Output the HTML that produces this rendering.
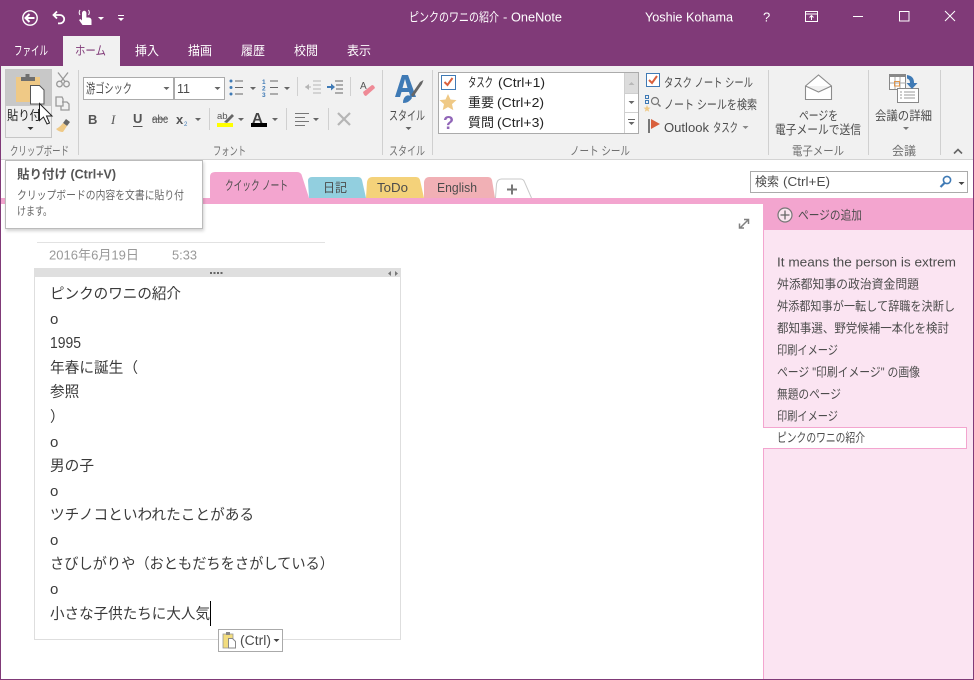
<!DOCTYPE html>
<html lang="ja"><head><meta charset="utf-8"><title>OneNote</title>
<style>
html,body{margin:0;padding:0;background:#fff;width:974px;height:680px;overflow:hidden}
svg{display:block;position:absolute;left:0;top:0}
text{font-family:"Liberation Sans","Noto Sans CJK JP",sans-serif;font-size:12.5px;fill:#555;white-space:pre}
.w{fill:#fff}
.k{fill:#222;font-size:13px}
.n{font-size:14.67px;fill:#3a3a3a}
.l{font-size:12px;fill:#707070}
.p{font-size:12.5px;fill:#4c4c4c}
.g{fill:none;stroke:#999;stroke-width:1.3}
</style></head><body>
<svg width="974" height="680" viewBox="0 0 974 680" xmlns="http://www.w3.org/2000/svg">
<!-- window -->
<rect width="974" height="680" fill="#fff"/>
<rect width="974" height="66" fill="#803a78"/>
<!-- title bar -->
<circle cx="30" cy="18" r="7.200" fill="none" stroke="#fff" stroke-width="1.400"/>
<path d="M25.500 18h9M29.500 14l-4 4 4 4" fill="none" stroke="#fff" stroke-width="2"/>
<path d="M57 11.500l-3.500 3.500 3.500 3.500M54 15h6a4.200 4.200 0 0 1 0 8.400h-2" fill="none" stroke="#fff" stroke-width="1.800"/>
<path d="M82 16v-3a2.200 2.200 0 0 1 4.400 0v4.500h2.600q2.500 .5 2.500 3v4.500h-9l-3.500-5 1.500-1 1.500 1.500z" fill="#fff"/>
<path d="M80 15a4.500 4.500 0 0 1 0-5M88.500 15a4.500 4.500 0 0 0 0-5" fill="none" stroke="#fff" stroke-width="1"/>
<path d="M98 17h6l-3 3zM118 15h6v1h-6zM118 18h6l-3 3z" fill="#fff"/>
<text class="w" x="409" y="21.500" textLength="90" lengthAdjust="spacingAndGlyphs">ピンクのワニの紹介</text>
<text class="w" x="503" y="21.500" style="font-size:13px">-</text>
<text class="w" x="511" y="21.500" textLength="51" lengthAdjust="spacingAndGlyphs" style="font-size:13px">OneNote</text>
<text class="w" x="645" y="21.500" textLength="88" lengthAdjust="spacingAndGlyphs" style="font-size:13px">Yoshie Kohama</text>
<text class="w" x="763" y="21.500" style="font-size:13px">?</text>
<path d="M805.500 11.500h12v10h-12zM805.500 14h12M811.500 20v-4M809.500 17.500l2-2 2 2" fill="none" stroke="#fff"/>
<path d="M853 16.500h10" stroke="#fff" fill="none"/>
<rect x="899.500" y="11.500" width="9.500" height="9.500" fill="none" stroke="#fff"/>
<path d="M945 11l10 10M955 11l-10 10" stroke="#fff" fill="none"/>
<!-- menu tabs -->
<rect x="63" y="36" width="57" height="30" fill="#f1f1f1"/>
<text class="w" x="14" y="55" textLength="34" lengthAdjust="spacingAndGlyphs">ファイル</text>
<text x="75" y="55" textLength="31" lengthAdjust="spacingAndGlyphs" style="fill:#803a78">ホーム</text>
<text class="w" x="135" y="55" textLength="24" lengthAdjust="spacingAndGlyphs">挿入</text>
<text class="w" x="188" y="55" textLength="24" lengthAdjust="spacingAndGlyphs">描画</text>
<text class="w" x="241" y="55" textLength="24" lengthAdjust="spacingAndGlyphs">履歴</text>
<text class="w" x="294" y="55" textLength="24" lengthAdjust="spacingAndGlyphs">校閲</text>
<text class="w" x="347" y="55" textLength="24" lengthAdjust="spacingAndGlyphs">表示</text>
<!-- ribbon -->
<rect y="66" width="974" height="93" fill="#f1f1f1"/>
<rect y="159" width="974" height="1" fill="#d4d4d4"/>
<g fill="#d0d0d0">
<rect x="78" y="70" width="1" height="85"/><rect x="382" y="70" width="1" height="85"/><rect x="432" y="70" width="1" height="85"/>
<rect x="768" y="70" width="1" height="85"/><rect x="868" y="70" width="1" height="85"/><rect x="940" y="70" width="1" height="85"/>
<rect x="297" y="77" width="1" height="19"/><rect x="350" y="77" width="1" height="19"/>
<rect x="209" y="108" width="1" height="22"/><rect x="286" y="108" width="1" height="22"/><rect x="328" y="108" width="1" height="22"/>
</g>
<!-- paste -->
<rect x="5.500" y="69.500" width="46" height="68" fill="#efefef" stroke="#c6c6c6"/>
<rect x="6" y="70" width="45" height="36" fill="#c8c8c8"/>
<rect x="16" y="77" width="24" height="25" fill="#efc986"/>
<path d="M21 81v-4h4.500v-3h4v3H35v4z" fill="#6f6f6f"/>
<path d="M30.500 85.500h9l4.500 4.500v14h-13.500z" fill="#fff" stroke="#555"/>
<text class="k" x="7" y="120" textLength="34" lengthAdjust="spacingAndGlyphs">貼り付</text>
<path d="M27.500 127h6l-3 3z" fill="#333"/>
<path d="M39.500 103.500v17l4-3.500 3.500 7 2.500-1-3-7h5.500z" fill="#fff" stroke="#222"/>
<!-- scissors, copy, brush -->
<path class="g" d="M58 72.500l7 9M68 72.500l-7 9"/><circle class="g" cx="59.500" cy="84" r="2.800"/><circle class="g" cx="66.500" cy="84" r="2.800"/>
<path class="g" d="M56 97h6l1 2v7h-7zM62 102h5l2 2v6h-8v-4"/>
<path d="M66 119l4 3-3 4-4-3z" fill="#666"/><path d="M63 123l4 3-4 6q-4 0-7-3 4-2 7-6z" fill="#efc986"/>
<text class="l" x="10" y="155" textLength="59" lengthAdjust="spacingAndGlyphs">クリップボード</text>
<!-- font combos -->
<rect x="83.500" y="77.500" width="90" height="22" fill="#fff" stroke="#ababab"/>
<rect x="174.500" y="77.500" width="50" height="22" fill="#fff" stroke="#ababab"/>
<text class="p" x="86" y="93" textLength="46" lengthAdjust="spacingAndGlyphs" style="font-size:13px">游ゴシック</text>
<text class="p" x="177" y="93" textLength="13" lengthAdjust="spacingAndGlyphs" style="font-size:13px">11</text>
<g fill="#666"><path d="M163.500 87h6l-3 3zM214.500 87h6l-3 3zM250 87h6l-3 3zM284 87h6l-3 3z"/><path d="M195 118h6l-3 3zM238 118h6l-3 3zM272 118h6l-3 3zM313 118h6l-3 3z"/></g>
<g fill="#3f7ab5"><circle cx="231" cy="81" r="1.500"/><circle cx="231" cy="87.500" r="1.500"/><circle cx="231" cy="94" r="1.500"/></g>
<path d="M235 81h8M235 87.500h8M235 94h8M270 81h8M270 87.500h8M270 94h8" stroke="#666" fill="none"/>
<text x="262" y="84" style="font-size:6.500px;fill:#3f7ab5;font-weight:bold">1</text><text x="262" y="90.500" style="font-size:6.500px;fill:#3f7ab5;font-weight:bold">2</text><text x="262" y="97" style="font-size:6.500px;fill:#3f7ab5;font-weight:bold">3</text>
<path d="M313 81h8M313 85h8M313 89h8M313 93h8M305 87h6" stroke="#b5b5b5" fill="none"/><path d="M305 87l4-3v6z" fill="#b5b5b5"/>
<path d="M335 81h8M336 85h7M336 89h7M335 93h8" stroke="#666" fill="none"/><path d="M327 86h6v2h-6z" fill="#3f7ab5"/><path d="M335 87l-4-3.500v7z" fill="#3f7ab5"/>
<text x="360" y="89" style="font-size:10px;fill:#555">A</text>
<path d="M363 92l9-7q2 0 3 3l-9 8q-2 0-3-4z" fill="#ef8a96"/>
<!-- font row 2 -->
<text x="88" y="124" style="font-size:13px;font-weight:bold;fill:#555">B</text>
<text x="111" y="124" style="font-size:13px;font-style:italic;font-family:'Liberation Serif',serif;fill:#555">I</text>
<text x="133" y="123" style="font-size:13px;font-weight:bold;fill:#555">U</text><path d="M133 126.500h9.500" stroke="#555" fill="none"/>
<text x="152" y="123" textLength="16" lengthAdjust="spacingAndGlyphs" style="font-size:12px;fill:#555">abc</text><path d="M152 119h16" stroke="#555" fill="none"/>
<text x="176" y="124" style="font-size:13px;font-weight:bold;fill:#555">x</text><text x="184" y="126" style="font-size:6px;fill:#3f7ab5">2</text>
<text x="217" y="119" style="font-size:9.500px;fill:#555">ab</text><path d="M224 122l8-8 2 2-7 7z" fill="#666"/><rect x="217" y="123" width="16" height="4" fill="#ffff00"/>
<text x="252" y="123" style="font-size:15px;fill:#444;font-weight:bold">A</text><rect x="251" y="123" width="16" height="4" fill="#000"/>
<path d="M295 113.500h14M295 117.500h10M295 121.500h14M295 125.500h10" stroke="#777" fill="none"/>
<path d="M338 113l12 12M350 113l-12 12" stroke="#b5b5b5" stroke-width="2.200" fill="none"/>
<text class="l" x="213" y="155" textLength="33" lengthAdjust="spacingAndGlyphs">フォント</text>
<!-- style -->
<path fill-rule="evenodd" d="M395 97L402 75h6L416 97h-5.500l-1.500-5h-7.500l-1.500 5zM402.500 88h5L405 79z" fill="#3f7ab5"/>
<path d="M411 95l9-13 3.500-2-1.500 4-9 13z" fill="#666"/><path d="M403 103q0-6 4-7.500 4-.5 5 2.500-3 5-9 5z" fill="#3f7ab5"/>
<text class="p" x="389" y="120" textLength="36" lengthAdjust="spacingAndGlyphs">スタイル</text>
<path d="M405.500 127h6l-3 3z" fill="#666"/>
<text class="l" x="389" y="155" textLength="36" lengthAdjust="spacingAndGlyphs">スタイル</text>
<!-- tag gallery -->
<rect x="438.500" y="72.500" width="200" height="61" fill="#fff" stroke="#ababab"/>
<rect x="625" y="73" width="13" height="20" fill="#dcdcdc"/>
<path d="M625 93.500h13M625 112.500h13M624.500 73v60" stroke="#cfcfcf" fill="none"/>
<path d="M628.500 85l3-3 3 3z" fill="#b8b8b8"/><path d="M628.500 101h6l-3 3z" fill="#666"/><path d="M628 119h7v1h-7zM628.500 122h6l-3 3z" fill="#666"/>
<rect x="441.500" y="75.500" width="14" height="14" fill="#fff" stroke="#3f7ab5"/>
<path d="M444.500 82l3 3 5-7" fill="none" stroke="#d9603c" stroke-width="2"/>
<path d="M448 94l2.500 5.500 6 .6-4.500 4 1.300 6-5.300-3-5.300 3 1.300-6-4.500-4 6-.6z" fill="#efc986"/>
<text x="443" y="129" style="font-size:18px;font-weight:bold;fill:#9166b8">?</text>
<text class="k" x="468" y="87" textLength="25" lengthAdjust="spacingAndGlyphs">タスク</text><text class="k" x="498" y="87" textLength="47" lengthAdjust="spacingAndGlyphs">(Ctrl+1)</text>
<text class="k" x="468" y="107">重要</text><text class="k" x="497" y="107" textLength="47" lengthAdjust="spacingAndGlyphs">(Ctrl+2)</text>
<text class="k" x="468" y="127">質問</text><text class="k" x="497" y="127" textLength="47" lengthAdjust="spacingAndGlyphs">(Ctrl+3)</text>
<text class="l" x="570" y="155" textLength="60" lengthAdjust="spacingAndGlyphs">ノート シール</text>
<rect x="646.500" y="73.500" width="13" height="13" fill="#fff" stroke="#3f7ab5"/>
<path d="M649 80l3 3 5-7" fill="none" stroke="#d9603c" stroke-width="2"/>
<text class="p" x="664" y="87" textLength="89" lengthAdjust="spacingAndGlyphs">タスク ノート シール</text>
<path d="M645.500 95.500h3v3h-3zM645.500 100.500h3v3h-3z" fill="none" stroke="#3f7ab5"/>
<circle cx="655" cy="101" r="3.500" fill="none" stroke="#777" stroke-width="1.200"/><path d="M658 104l2.500 2.500" stroke="#777" stroke-width="1.500"/>
<path d="M647 105l1 2.500 2.500.2-2 1.600.7 2.500-2.200-1.400-2.200 1.400.7-2.500-2-1.600 2.500-.2z" fill="#efc986"/>
<text class="p" x="664" y="109" textLength="93" lengthAdjust="spacingAndGlyphs">ノート シールを検索</text>
<rect x="648" y="119" width="2" height="14" fill="#777"/><path d="M651 119l9 5-9 5z" fill="#d9603c"/>
<text class="p" x="664" y="132" textLength="45" lengthAdjust="spacingAndGlyphs" style="font-size:13px">Outlook</text><text class="p" x="713" y="132" textLength="25" lengthAdjust="spacingAndGlyphs">タスク</text>
<path d="M742.500 126h6l-3 3z" fill="#888"/>
<!-- email -->
<path d="M805.500 86l13-11 13 11v13.500h-26zM805.500 86l13 6 13-6" fill="#fff" stroke="#8c8c8c" stroke-width="1.100"/>
<text class="p" x="799" y="120" textLength="39" lengthAdjust="spacingAndGlyphs">ページを</text>
<text class="p" x="775" y="134" textLength="86" lengthAdjust="spacingAndGlyphs">電子メールで送信</text>
<text class="l" x="792" y="155" textLength="52" lengthAdjust="spacingAndGlyphs">電子メール</text>
<!-- meeting -->
<rect x="889.500" y="75.500" width="16" height="14" fill="#fff" stroke="#888"/><rect x="889" y="74" width="17" height="3" fill="#888"/>
<path d="M895 77v12M900 77v12M890 83h16" stroke="#aaa" fill="none"/><rect x="894.500" y="81.500" width="5" height="4.500" fill="none" stroke="#e0954a"/>
<rect x="897.500" y="88.500" width="21" height="14" fill="#fff" stroke="#888"/>
<path d="M904 92h11M904 95h11M904 98h11M900 92h2M900 95h2M900 98h2" stroke="#999" fill="none"/>
<path d="M907 75q7 1 7 7.500v.5h3.500l-5.500 6-5.500-6h3.500v-.5q0-3-3-4z" fill="#3f7ab5"/>
<text class="p" x="875" y="120" textLength="57" lengthAdjust="spacingAndGlyphs">会議の詳細</text>
<path d="M903 127h6l-3 3z" fill="#777"/>
<text class="l" x="892" y="155" textLength="24" lengthAdjust="spacingAndGlyphs">会議</text>
<path d="M954 153.500l4-4 4 4" fill="none" stroke="#666" stroke-width="1.600"/>
<!-- section tabs -->
<rect y="198" width="974" height="6" fill="#f3a5cf"/>
<path d="M210 198v-21q0-5 5-5h82q4 0 5 4l7 22z" fill="#f3a5cf"/>
<path d="M309 198l-1-17q0-4 4-4h46q3 0 4 3l4 18z" fill="#92cfdf"/>
<path d="M366 198l1-16q1-5 5-5h44q3 0 4 3l4 18z" fill="#f4d27a"/>
<path d="M424 198l0-16q1-5 5-5h59q3 0 4 3l3 18z" fill="#f1b0b5"/>
<path d="M495.500 198l1-14q1-5 5-5h19q3 0 4 3l7 16" fill="#fff" stroke="#c9c9c9"/>
<text class="p" x="225" y="190" textLength="63" lengthAdjust="spacingAndGlyphs" style="font-size:13px">クイック ノート</text>
<text class="p" x="323" y="192" textLength="24" lengthAdjust="spacingAndGlyphs">日記</text>
<text class="p" x="377" y="192" textLength="31" lengthAdjust="spacingAndGlyphs" style="font-size:13px">ToDo</text>
<text class="p" x="437" y="192" textLength="40" lengthAdjust="spacingAndGlyphs" style="font-size:13px">English</text>
<path d="M507 189.500h10M512 184.500v10" stroke="#777" stroke-width="2" fill="none"/>
<!-- search -->
<rect x="750.500" y="171.500" width="217" height="21" fill="#fff" stroke="#ababab"/>
<text class="p" x="755" y="186" textLength="24" lengthAdjust="spacingAndGlyphs">検索</text><text class="p" x="783" y="186" textLength="47" lengthAdjust="spacingAndGlyphs" style="font-size:13px">(Ctrl+E)</text>
<circle cx="947" cy="180" r="3.600" fill="none" stroke="#3f7ab5" stroke-width="1.600"/><path d="M944.500 183l-4 4" stroke="#3f7ab5" stroke-width="2.200"/>
<path d="M958.500 182h6l-3 3z" fill="#444"/>
<!-- page panel -->
<rect x="763" y="204" width="211" height="476" fill="#fbe4f2"/>
<rect x="763" y="198" width="211" height="32" fill="#f3a5cf"/>
<rect x="763" y="230" width="1" height="450" fill="#f3a5cf"/>
<circle cx="785" cy="215" r="7" fill="#f9e4ef" stroke="#777" stroke-width="1.200"/>
<path d="M780.500 215h9M785 210.500v9" stroke="#666" stroke-width="1.300" fill="none"/>
<text class="p" x="798" y="219.500" textLength="64" lengthAdjust="spacingAndGlyphs">ページの追加</text>
<text class="p" x="777" y="266.500" textLength="179" lengthAdjust="spacingAndGlyphs" style="font-size:13px">It means the person is extrem</text>
<text class="p" x="777" y="288.500" textLength="142" lengthAdjust="spacingAndGlyphs">舛添都知事の政治資金問題</text>
<text class="p" x="777" y="310.500" textLength="178" lengthAdjust="spacingAndGlyphs">舛添都知事が一転して辞職を決断し</text>
<text class="p" x="777" y="332.500" textLength="172" lengthAdjust="spacingAndGlyphs">都知事選、野党候補一本化を検討</text>
<text class="p" x="777" y="354.500" textLength="61" lengthAdjust="spacingAndGlyphs">印刷イメージ</text>
<text class="p" x="777" y="376.500" textLength="143" lengthAdjust="spacingAndGlyphs">ページ "印刷イメージ" の画像</text>
<text class="p" x="777" y="398.500" textLength="64" lengthAdjust="spacingAndGlyphs">無題のページ</text>
<text class="p" x="777" y="420.500" textLength="61" lengthAdjust="spacingAndGlyphs">印刷イメージ</text>
<path d="M763 427.500h203.500v21H763" fill="#fff" stroke="#f3a5cf"/>
<rect x="763" y="428" width="3" height="20" fill="#fff"/>
<text class="p" x="777" y="442" textLength="88" lengthAdjust="spacingAndGlyphs">ピンクのワニの紹介</text>
<!-- page body -->
<path d="M740 228l8-8M744 219.500h4.500v4.500M739.500 223.500v4.500h4.500" fill="none" stroke="#808080" stroke-width="1.500"/>
<rect x="37" y="242" width="288" height="1" fill="#e2e2e2"/>
<text x="49" y="259.500" textLength="90" lengthAdjust="spacingAndGlyphs" style="fill:#999;font-size:13px">2016年6月19日</text>
<text x="172" y="259.500" textLength="25" lengthAdjust="spacingAndGlyphs" style="fill:#999;font-size:13px">5:33</text>
<rect x="34.500" y="268.500" width="366" height="371" fill="#fff" stroke="#dedede"/>
<rect x="34" y="268" width="367" height="9" fill="#dfdfdf"/>
<path d="M210 272h2v2h-2zM213.500 272h2v2h-2zM217 272h2v2h-2zM220.500 272h2v2h-2z" fill="#666"/>
<path d="M391 271v5l-3-2.500zM395 271v5l3-2.500z" fill="#777"/>
<text class="n" x="50" y="298.500" textLength="131" lengthAdjust="spacingAndGlyphs">ピンクのワニの紹介</text>
<text class="n" x="50" y="324" style="font-size:15px">o</text>
<text class="n" x="50" y="348" textLength="31" lengthAdjust="spacingAndGlyphs" style="font-size:16px">1995</text>
<text class="n" x="50" y="372.500" textLength="88" lengthAdjust="spacingAndGlyphs">年春に誕生（</text>
<text class="n" x="50" y="396.500">参照</text>
<text class="n" x="50" y="421.500">）</text>
<text class="n" x="50" y="447" style="font-size:15px">o</text>
<text class="n" x="50" y="470.500">男の子</text>
<text class="n" x="50" y="496" style="font-size:15px">o</text>
<text class="n" x="50" y="519.500" textLength="204" lengthAdjust="spacingAndGlyphs">ツチノコといわれたことがある</text>
<text class="n" x="50" y="545" style="font-size:15px">o</text>
<text class="n" x="50" y="568.500" textLength="284" lengthAdjust="spacingAndGlyphs">さびしがりや（おともだちをさがしている）</text>
<text class="n" x="50" y="594" style="font-size:15px">o</text>
<text class="n" x="50" y="618.500" textLength="160" lengthAdjust="spacingAndGlyphs">小さな子供たちに大人気</text>
<rect x="210" y="601" width="1" height="25" fill="#000"/>
<!-- paste options -->
<rect x="218.500" y="629.500" width="64" height="22" fill="#fff" stroke="#aaa"/>
<rect x="223" y="634" width="10" height="14" fill="#f2dc7e" stroke="#999" stroke-width=".8"/><rect x="226" y="632" width="4" height="3" fill="#888"/>
<path d="M228.500 638.500h4l3 3v6.500h-7z" fill="#fff" stroke="#888"/>
<text class="p" x="240" y="645" textLength="31" lengthAdjust="spacingAndGlyphs" style="font-size:13.500px">(Ctrl)</text>
<path d="M273.500 639h6l-3 3z" fill="#444"/>
<!-- tooltip -->
<defs><filter id="s" x="-5%" y="-5%" width="110%" height="115%"><feGaussianBlur stdDeviation="1.500"/></filter></defs>
<rect x="6" y="162" width="198" height="69" fill="#000" opacity=".18" filter="url(#s)"/>
<rect x="5.500" y="160.500" width="197" height="68" fill="#fff" stroke="#bbb"/>
<text x="17" y="178.500" textLength="99" lengthAdjust="spacingAndGlyphs" style="font-weight:bold;fill:#555">貼り付け (Ctrl+V)</text>
<text x="17" y="199" textLength="167" lengthAdjust="spacingAndGlyphs" style="font-size:11.500px;fill:#666">クリップボードの内容を文書に貼り付</text>
<text x="17" y="215" textLength="35" lengthAdjust="spacingAndGlyphs" style="font-size:11.500px;fill:#666">けます。</text>
<!-- window border -->
<rect x="0" y="66" width="1" height="614" fill="#803a78"/><rect x="973" y="66" width="1" height="614" fill="#803a78"/><rect x="0" y="679" width="974" height="1" fill="#803a78"/>
</svg>
</body></html>
